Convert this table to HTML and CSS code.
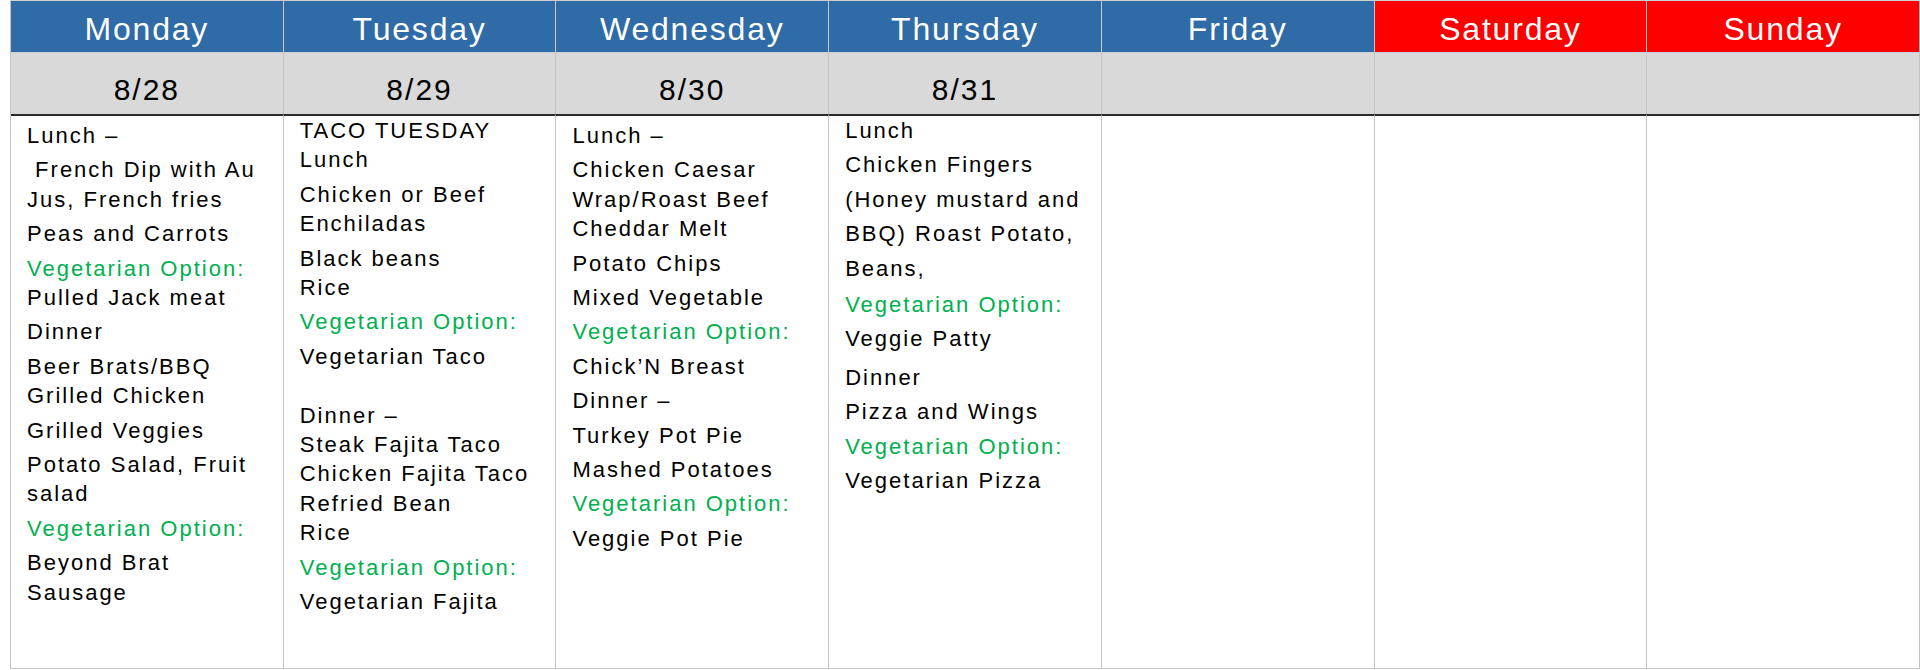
FILE: index.html
```html
<!DOCTYPE html>
<html>
<head>
<meta charset="utf-8">
<title>Weekly Menu</title>
<link rel="stylesheet" href="styles.css">
</head>
<body>
<div class="calendar">
  <div class="day weekday">Monday</div>
  <div class="day weekday">Tuesday</div>
  <div class="day weekday">Wednesday</div>
  <div class="day weekday">Thursday</div>
  <div class="day weekday">Friday</div>
  <div class="day weekend">Saturday</div>
  <div class="day weekend">Sunday</div>

  <div class="date">8/28</div>
  <div class="date">8/29</div>
  <div class="date">8/30</div>
  <div class="date">8/31</div>
  <div class="date"></div>
  <div class="date"></div>
  <div class="date"></div>

  <div class="menu">
    <p class="first">Lunch –</p>
    <p>&nbsp;French Dip with Au<br>Jus, French fries</p>
    <p>Peas and Carrots</p>
    <p><span class="veg">Vegetarian Option:</span><br>Pulled Jack meat</p>
    <p>Dinner</p>
    <p>Beer Brats/BBQ<br>Grilled Chicken</p>
    <p>Grilled Veggies</p>
    <p>Potato Salad, Fruit<br>salad</p>
    <p class="veg">Vegetarian Option:</p>
    <p>Beyond Brat<br>Sausage</p>
  </div>
  <div class="menu top">
    <p class="first">TACO TUESDAY<br>Lunch</p>
    <p>Chicken or Beef<br>Enchiladas</p>
    <p>Black beans<br>Rice</p>
    <p class="veg">Vegetarian Option:</p>
    <p>Vegetarian Taco<br><br>Dinner –<br>Steak Fajita Taco<br>Chicken Fajita Taco<br>Refried Bean<br>Rice</p>
    <p class="veg">Vegetarian Option:</p>
    <p>Vegetarian Fajita</p>
  </div>
  <div class="menu">
    <p class="first">Lunch –</p>
    <p>Chicken Caesar<br>Wrap/Roast Beef<br>Cheddar Melt</p>
    <p>Potato Chips</p>
    <p>Mixed Vegetable</p>
    <p class="veg">Vegetarian Option:</p>
    <p>Chick’N Breast</p>
    <p>Dinner –</p>
    <p>Turkey Pot Pie</p>
    <p>Mashed Potatoes</p>
    <p class="veg">Vegetarian Option:</p>
    <p>Veggie Pot Pie</p>
  </div>
  <div class="menu top">
    <p class="first">Lunch</p>
    <p>Chicken Fingers</p>
    <p>(Honey mustard and</p>
    <p>BBQ) Roast Potato,</p>
    <p>Beans,</p>
    <p class="veg gap-s">Vegetarian Option:</p>
    <p>Veggie Patty</p>
    <p class="gap-l">Dinner</p>
    <p>Pizza and Wings</p>
    <p class="veg">Vegetarian Option:</p>
    <p>Vegetarian Pizza</p>
  </div>
  <div class="menu"></div>
  <div class="menu"></div>
  <div class="menu"></div>
</div>
</body>
</html>
```
FILE: styles.css
```css
html, body {
  margin: 0;
  padding: 0;
  background: #ffffff;
}

body {
  font-family: "Liberation Sans", Arial, sans-serif;
  color: #000000;
}

.calendar {
  display: grid;
  grid-template-columns: repeat(7, 1fr);
  grid-template-rows: 52px 61px 555px;
  width: 1910px;
  margin-left: 10px;
  border-top: 1px solid #cfcfcf;
  border-left: 1px solid #c4c4c4;
  box-sizing: border-box;
}

.day {
  box-sizing: border-box;
  padding-top: 12px;
  font-size: 32px;
  line-height: 32px;
  letter-spacing: 1.8px;
  color: #ffffff;
  text-align: center;
  border-right: 1px solid #c8c8c8;
  border-bottom: 1px solid #c8d0da;
}

.weekday {
  background: #2f6ba6;
}

.weekend {
  background: #ff0000;
}

.date {
  box-sizing: border-box;
  padding-top: 22px;
  font-size: 30px;
  line-height: 30px;
  letter-spacing: 2px;
  text-align: center;
  background: #d9d9d9;
  border-right: 1px solid #c4c4c4;
}

.menu {
  box-sizing: border-box;
  padding: 0 6px 0 16px;
  border-top: 2px solid #2a2a2a;
  border-right: 1px solid #c4c4c4;
  border-bottom: 1px solid #c8c8c8;
  font-size: 22px;
  line-height: 29.4px;
  letter-spacing: 2px;
  white-space: nowrap;
  overflow: hidden;
}

.menu p {
  margin: 5px 0 0 0;
}

.menu.top p.first {
  margin-top: 0;
}

.menu .gap-s {
  margin-top: 7px;
}

.menu .gap-l {
  margin-top: 9px;
}

.veg {
  color: #00b050;
}
```
